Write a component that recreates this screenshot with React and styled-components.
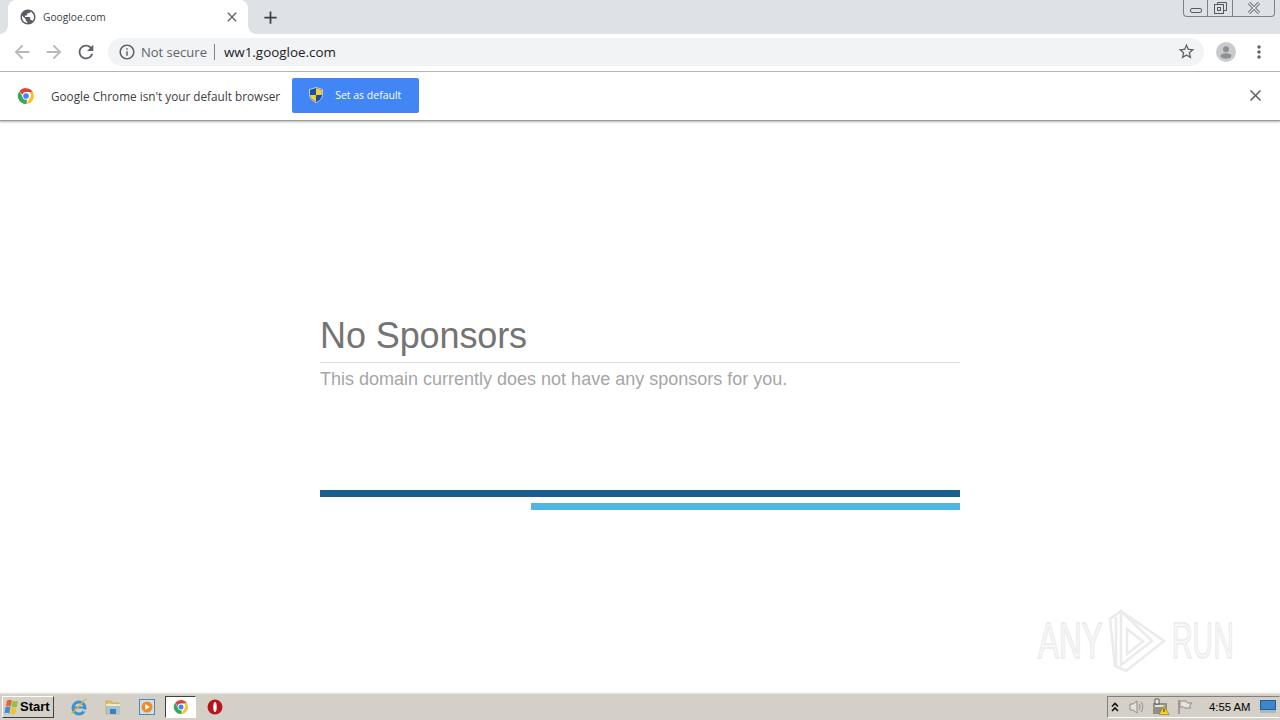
import React from 'react';
import styled, { createGlobalStyle } from 'styled-components';
import { MdAdd, MdArrowBack, MdArrowForward, MdClose, MdInfoOutline, MdMoreVert, MdPublic, MdRefresh, MdStarBorder } from 'react-icons/md';

const GlobalStyle = createGlobalStyle`
  html, body {
    margin: 0;
    padding: 0;
    background: #fff;
    overflow: hidden;
  }
  * {
    box-sizing: border-box;
  }
`;

const ChromeLogo = ({ size = 18 }) => (
  <svg width={size} height={size} viewBox="0 0 48 48">
    <path d="M24 3a21 21 0 0 1 18.2 10.5H24a10.500 10.500 0 0 0-10 7.300L6.800 11.200A21 21 0 0 1 24 3z" fill="#db4437" />
    <path d="M42.200 13.500A21 21 0 0 1 25 45l8.900-15.600a10.500 10.500 0 0 0-1.600-15.900z" fill="#fbc02d" />
    <path d="M25 45A21 21 0 0 1 6.800 11.200L15.500 27a10.500 10.500 0 0 0 11.500 7z" fill="#3aa757" />
    <circle cx="24" cy="24" r="9.500" fill="#fff" />
    <circle cx="24" cy="24" r="7.500" fill="#4285f4" />
  </svg>
);

const ShieldIcon = () => (
  <svg width="14" height="16" viewBox="0 0 14 16">
    <path d="M7 .5l6.500 2v5c0 3.800-2.800 6.500-6.500 8-3.700-1.500-6.500-4.200-6.500-8v-5z" fill="#1f4f9c" stroke="#dfe8f5" strokeWidth=".8" />
    <path d="M7 1.200l5.800 1.800V8H7zM7 8v6.800C3.800 13.400 1.200 11 1.200 8z" fill="#f6cf3f" />
  </svg>
);

const AvatarIcon = () => (
  <svg width="20" height="20" viewBox="0 0 20 20">
    <circle cx="10" cy="10" r="10" fill="#c8cacc" />
    <circle cx="10" cy="7.300" r="3" fill="#8e9194" />
    <ellipse cx="10" cy="14" rx="5.500" ry="2.700" fill="#8e9194" />
  </svg>
);

const CloseGlyph = () => (
  <svg width="14" height="12" viewBox="0 0 14 12">
    <path d="M2 1l10 10M12 1L2 11" stroke="#565a5f" strokeWidth="3" />
    <path d="M2 1l10 10M12 1L2 11" stroke="#e6e8ec" strokeWidth="1.400" />
  </svg>
);

const RestoreGlyph = () => (
  <svg width="13" height="12" viewBox="0 0 13 12" fill="none" stroke="#565a5f">
    <path d="M3.500 2.500v-2h9v8h-2.500" />
    <rect x=".5" y="2.500" width="9" height="9" />
    <rect x="3.500" y="5.500" width="3" height="3" />
  </svg>
);

const WinFlag = () => (
  <svg width="16" height="16" viewBox="0 0 16 16">
    <path d="M3 1.500c1.700-1 3.300-1 5 0L6.800 7.500c-1.700-1-3.300-1-5 0z" fill="#e8662c" />
    <path d="M8.800 1.800c1.700 1 3.400 1 5.200 0l-1.200 6c-1.800 1-3.500 1-5.200 0z" fill="#8fc33f" />
    <path d="M1.500 8.300c1.700-1 3.300-1 5 0L5.300 14.500c-1.700-1-3.300-1-5 0z" fill="#3f8fd8" />
    <path d="M7.300 8.600c1.700 1 3.400 1 5.200 0l-1.200 6c-1.800 1-3.500 1-5.200 0z" fill="#f2c230" />
  </svg>
);

const IeIcon = () => (
  <svg width="18" height="18" viewBox="0 0 18 18">
    <circle cx="9" cy="10" r="6" fill="none" stroke="#3a93d8" strokeWidth="3" />
    <path d="M4 9.500h10" stroke="#3a93d8" strokeWidth="2" />
    <path d="M13 12.500l3 0" stroke="#d4d0c8" strokeWidth="2" />
    <path d="M2 15C0 17 5 13 10 7s7-7 6-5" fill="none" stroke="#e2b23a" strokeWidth="1.300" />
  </svg>
);

const FolderIcon = () => (
  <svg width="16" height="17" viewBox="0 0 16 17">
    <path d="M1 3h5l1 2h7v11H1z" fill="#e6c25e" stroke="#b59a4c" strokeWidth=".6" />
    <path d="M2 7h12v9H2z" fill="#9cc8e6" />
    <path d="M5 16v-5h6v5z" fill="#3f80b6" />
    <path d="M1 6h14v2H1z" fill="#f6e9b4" />
  </svg>
);

const MediaIcon = () => (
  <svg width="16" height="16" viewBox="0 0 16 16">
    <rect x=".5" y=".5" width="15" height="15" fill="#cfe0ee" stroke="#4f87b8" />
    <circle cx="8" cy="8" r="5.500" fill="#ef8c24" />
    <path d="M6.300 5l4.500 3-4.500 3z" fill="#fff" />
  </svg>
);

const OperaIcon = () => (
  <svg width="16" height="16" viewBox="0 0 16 16">
    <circle cx="8" cy="8" r="7.500" fill="#b9141a" />
    <ellipse cx="8" cy="8" rx="1.700" ry="5" fill="#fff" />
  </svg>
);

const ChevronsIcon = () => (
  <svg width="8" height="10" viewBox="0 0 8 10" fill="none" stroke="#111" strokeWidth="1.600">
    <path d="M1 4.500l3-3 3 3M1 9l3-3 3 3" />
  </svg>
);

const SpeakerIcon = () => (
  <svg width="18" height="16" viewBox="0 0 18 16">
    <path d="M2 5h3l4-3v12l-4-3H2z" fill="#e6e2da" stroke="#8e8c86" />
    <path d="M11 5c1.300 1.500 1.300 4.500 0 6M13 3c2.300 2.500 2.300 7.500 0 10" fill="none" stroke="#8e8c86" />
  </svg>
);

const NetworkIcon = () => (
  <svg width="18" height="17" viewBox="0 0 18 17">
    <rect x="1" y="5" width="14" height="11" fill="#8f8f88" />
    <path d="M3 1h4v5H3z" fill="#f0efe9" stroke="#5b5b55" />
    <rect x="3" y="7" width="10" height="2" fill="#e5e3dc" />
    <path d="M12 7.500l5 9H7z" fill="#f4d02c" stroke="#8a7510" strokeWidth=".6" />
    <path d="M12 10.500v3.500" stroke="#222" />
  </svg>
);

const FlagIcon = () => (
  <svg width="16" height="16" viewBox="0 0 16 16">
    <path d="M2 1v14" stroke="#8e8c86" strokeWidth="1.500" />
    <path d="M3 2h6l1.500 2H15l-2.500 3 1.500 2H8L6.500 8H3z" fill="#e8e4dc" stroke="#8e8c86" />
  </svg>
);

const DesktopIcon = () => (
  <svg width="16" height="13" viewBox="0 0 16 13">
    <rect width="16" height="13" fill="#1f5f9e" />
    <rect x="1" y="1" width="14" height="8" fill="#3c86c9" />
    <rect y="10" width="16" height="3" fill="#a9b8c4" />
  </svg>
);

const PlayMark = () => (
  <svg width="58" height="64" viewBox="0 0 58 64" fill="none" stroke="#ebebeb" strokeWidth="2.500">
    <path d="M2 10L13 2l43 30-38 30-11-5z" />
    <path d="M8 8v50M13 2v54l31-24z" />
    <path d="M19 20v25l16-12.500z" />
  </svg>
);

const App = () => {
  return (
    <Page>
      <GlobalStyle />
      <TabStrip>
        <Tab>
          <MdPublic size={18} color="#5a5d62" />
          <TabTitle>Googloe.com</TabTitle>
          <MdClose size={16} color="#5f6368" />
        </Tab>
        <NewTab><MdAdd size={21} /></NewTab>
        <WindowControls>
          <WinButton $w={24}><MinGlyph /></WinButton>
          <WinButton $w={25}><RestoreGlyph /></WinButton>
          <WinButton $w={41} $last><CloseGlyph /></WinButton>
        </WindowControls>
      </TabStrip>
      <Toolbar>
        <NavIcon $dim><MdArrowBack size={22} /></NavIcon>
        <NavIcon $dim><MdArrowForward size={22} /></NavIcon>
        <NavIcon><MdRefresh size={22} /></NavIcon>
        <Omnibox>
          <MdInfoOutline size={18} color="#5f6368" />
          <NotSecure>Not secure</NotSecure>
          <Url>ww1.googloe.com</Url>
          <MdStarBorder size={19} color="#5f6368" />
        </Omnibox>
        <Profile><AvatarIcon /></Profile>
        <MenuDots><MdMoreVert size={20} /></MenuDots>
      </Toolbar>
      <Infobar>
        <ChromeLogo />
        <InfoText>Google Chrome isn't your default browser</InfoText>
        <DefaultButton>
          <ShieldIcon />
          <span>Set as default</span>
        </DefaultButton>
        <InfoClose><MdClose size={19} /></InfoClose>
      </Infobar>
      <Content>
        <Sponsors>
          <Heading>No Sponsors</Heading>
          <Subheading>This domain currently does not have any sponsors for you.</Subheading>
          <DarkBar />
          <LightBar />
        </Sponsors>
        <Watermark>
          <WatermarkText $w={64} $scale={0.63}>ANY</WatermarkText>
          <PlayMark />
          <WatermarkText $w={62} $scale={0.57}>RUN</WatermarkText>
        </Watermark>
      </Content>
      <Taskbar>
        <StartButton>
          <WinFlag />
          <span>Start</span>
        </StartButton>
        <QuickLaunch>
          <TaskIcon><IeIcon /></TaskIcon>
          <TaskIcon><FolderIcon /></TaskIcon>
          <TaskIcon><MediaIcon /></TaskIcon>
          <TaskIcon $active><ChromeLogo size={16} /></TaskIcon>
          <TaskIcon><OperaIcon /></TaskIcon>
        </QuickLaunch>
        <Tray>
          <TrayItem $gap={3}><ChevronsIcon /></TrayItem>
          <TrayItem $gap={9}><SpeakerIcon /></TrayItem>
          <TrayItem $gap={6}><NetworkIcon /></TrayItem>
          <TrayItem $gap={7}><FlagIcon /></TrayItem>
          <Clock>4:55 AM</Clock>
          <TrayItem $gap={10}><DesktopIcon /></TrayItem>
        </Tray>
      </Taskbar>
    </Page>
  );
};

const Page = styled.div`
  display: flex;
  flex-direction: column;
  width: 1280px;
  height: 720px;
  overflow: hidden;
  font-family: "Open Sans", "Noto Sans", sans-serif;
`;

const TabStrip = styled.div`
  position: relative;
  display: flex;
  align-items: flex-end;
  height: 34px;
  padding-left: 8px;
  background: #dee1e6;
`;

const Tab = styled.div`
  position: relative;
  display: flex;
  align-items: center;
  width: 240px;
  height: 34px;
  padding: 0 8px 1px 11px;
  background: #fff;
  border-radius: 8px 8px 0 0;
  &::before,
  &::after {
    content: '';
    position: absolute;
    bottom: 0;
    width: 8px;
    height: 8px;
  }
  &::before {
    left: -8px;
    background: radial-gradient(circle at 0 0, #dee1e6 7.500px, #fff 8px);
  }
  &::after {
    right: -8px;
    background: radial-gradient(circle at 100% 0, #dee1e6 7.500px, #fff 8px);
  }
`;

const TabTitle = styled.span`
  flex: 1;
  margin-left: 6px;
  font-size: 10.200px;
  color: #3c4043;
`;

const NewTab = styled.div`
  display: flex;
  align-items: center;
  justify-content: center;
  width: 28px;
  height: 34px;
  margin-left: 8px;
  color: #3c4043;
`;

const WindowControls = styled.div`
  position: absolute;
  top: 0;
  right: 5px;
  display: flex;
  height: 17px;
  border: 1px solid #7d8288;
  border-top: none;
  border-radius: 0 0 4px 4px;
`;

const WinButton = styled.div`
  display: flex;
  align-items: center;
  justify-content: center;
  width: ${({ $w }) => $w}px;
  border-right: ${({ $last }) => ($last ? 'none' : '1px solid #7d8288')};
`;

const MinGlyph = styled.span`
  display: block;
  width: 12px;
  height: 5px;
  margin-top: 5px;
  border: 1px solid #565a5f;
  border-radius: 2px;
`;

const Toolbar = styled.div`
  display: flex;
  align-items: center;
  height: 38px;
  padding: 0 11px 2px 6px;
  background: #fff;
  border-bottom: 1px solid #b8b8b8;
`;

const NavIcon = styled.div`
  display: flex;
  align-items: center;
  justify-content: center;
  width: 32px;
  color: ${({ $dim }) => ($dim ? '#b4b7bb' : '#5f6368')};
`;

const Omnibox = styled.div`
  display: flex;
  align-items: center;
  width: 1096px;
  height: 28px;
  margin-left: 6px;
  padding: 0 8px 0 10px;
  background: #f1f3f4;
  border-radius: 14px;
`;

const NotSecure = styled.span`
  margin-left: 5px;
  padding-right: 7px;
  font-size: 13px;
  line-height: 16px;
  color: #5f6368;
  border-right: 1px solid #80868b;
`;

const Url = styled.span`
  flex: 1;
  margin-left: 9px;
  font-size: 13.400px;
  color: #202124;
`;

const Profile = styled.div`
  display: flex;
  margin-left: 12px;
`;

const MenuDots = styled.div`
  display: flex;
  margin-left: 13px;
  color: #5f6368;
`;

const Infobar = styled.div`
  position: relative;
  z-index: 1;
  display: flex;
  align-items: center;
  height: 49px;
  padding: 0 15px 1px 17px;
  background: #fff;
  border-bottom: 1px solid #9c9c9c;
  box-shadow: 0 1px 2px rgba(0, 0, 0, 0.3);
`;

const InfoText = styled.span`
  margin-left: 16px;
  font-size: 11.750px;
  color: #3c4043;
`;

const DefaultButton = styled.div`
  display: flex;
  align-items: center;
  gap: 12px;
  width: 127px;
  height: 35px;
  margin-left: 12px;
  padding: 0 0 1px 17px;
  font-size: 10.500px;
  color: #fff;
  background: #4285f4;
  border-radius: 2px;
`;

const InfoClose = styled.div`
  display: flex;
  margin-left: auto;
  color: #5f6368;
`;

const Content = styled.main`
  position: relative;
  flex: 1;
  display: flex;
  justify-content: center;
  background: #fff;
`;

const Sponsors = styled.section`
  display: flex;
  flex-direction: column;
  width: 640px;
  padding-top: 193px;
  font-family: "Liberation Sans", Arial, sans-serif;
`;

const Heading = styled.h1`
  margin: 0;
  padding-bottom: 4px;
  font-size: 36px;
  line-height: 44px;
  font-weight: 400;
  letter-spacing: -0.1px;
  color: #747474;
  border-bottom: 1px solid #dedede;
`;

const Subheading = styled.p`
  margin: 6px 0 0;
  font-size: 18px;
  line-height: 20px;
  color: #a6a6a6;
`;

const DarkBar = styled.div`
  height: 7px;
  margin-top: 101px;
  background: #1a5f8c;
`;

const LightBar = styled.div`
  align-self: flex-end;
  width: 429px;
  height: 7px;
  margin-top: 6px;
  background: #4fb5e2;
`;

const Watermark = styled.div`
  position: absolute;
  top: 488px;
  left: 1038px;
  display: flex;
  align-items: center;
  gap: 6px;
`;

const WatermarkText = styled.span`
  display: block;
  width: ${({ $w }) => $w}px;
  font-family: "Liberation Sans", sans-serif;
  font-size: 50px;
  line-height: 50px;
  white-space: nowrap;
  color: #f8f8f8;
  -webkit-text-stroke: 1.500px #ebebeb;
  transform: scaleX(${({ $scale }) => $scale});
  transform-origin: left center;
`;

const Taskbar = styled.footer`
  display: flex;
  align-items: center;
  height: 28px;
  padding-left: 2px;
  background: #d4d0c8;
  border-top: 1px solid #f4f2ee;
  box-shadow: inset 0 1px 0 #e8e6e0;
`;

const StartButton = styled.div`
  display: flex;
  align-items: center;
  width: 52px;
  height: 22px;
  padding-left: 1px;
  font-family: "Liberation Sans", Arial, sans-serif;
  font-size: 13px;
  font-weight: 700;
  color: #000;
  border: 1px solid;
  border-color: #fff #404040 #404040 #fff;
`;

const QuickLaunch = styled.div`
  display: flex;
  align-items: center;
  gap: 3px;
  margin-left: 9px;
`;

const TaskIcon = styled.div`
  display: flex;
  align-items: center;
  justify-content: center;
  width: 31px;
  height: 22px;
  background: ${({ $active }) => ($active ? '#fff' : 'transparent')};
  border: ${({ $active }) => ($active ? '1px solid' : 'none')};
  border-color: #404040 #fff #fff #404040;
`;

const Tray = styled.div`
  display: flex;
  align-items: center;
  width: 173px;
  height: 22px;
  margin-left: auto;
  border: 1px solid;
  border-color: #808080 #d4d0c8 #fff #808080;
`;

const TrayItem = styled.span`
  display: flex;
  margin-left: ${({ $gap }) => $gap}px;
`;

const Clock = styled.span`
  margin-left: 16px;
  font-family: "Liberation Sans", Arial, sans-serif;
  font-size: 11.300px;
  color: #000;
`;

export default App;
